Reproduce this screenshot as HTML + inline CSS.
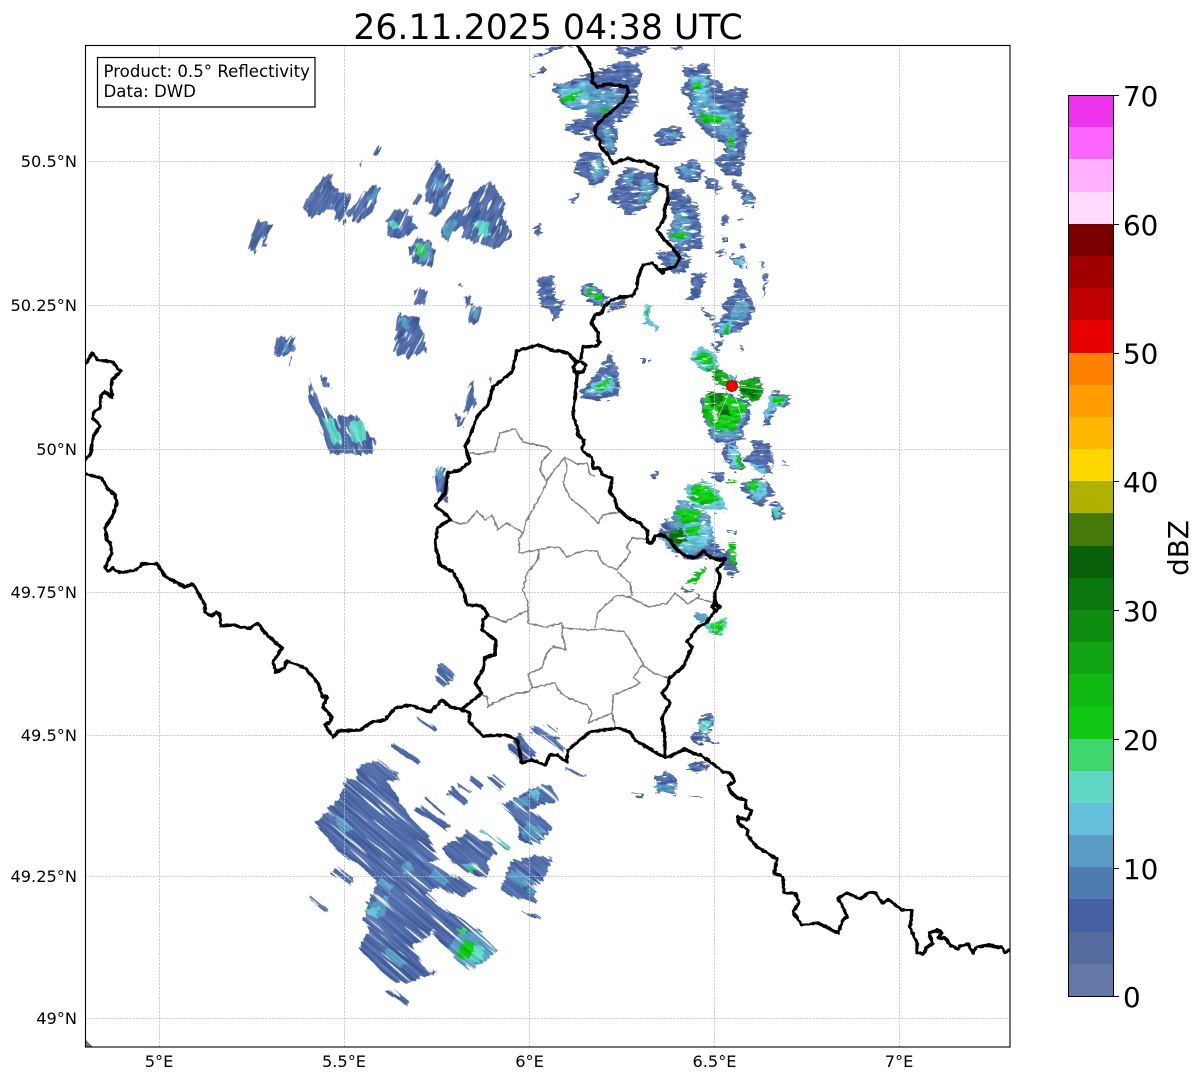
<!DOCTYPE html>
<html><head><meta charset="utf-8"><style>
html,body{margin:0;padding:0;background:#fff;overflow:hidden;width:1202px;height:1081px}
#f{width:1202px;height:1081px;overflow:hidden;contain:paint;position:relative}
svg{display:block;overflow:hidden}
text{font-family:"DejaVu Sans","Liberation Sans",sans-serif;fill:#000}
.b{fill:#4f6ba8}.c{fill:#4e7cb1}.m{fill:#5a9cc3}.l{fill:#66c2dc}.t{fill:#5fd6c4}.e{fill:#3ed76d}.g{fill:#10c814}.h{fill:#0fa414}.d{fill:#0a7a10}
.s{stroke:#4f6ba8;fill:none}
</style></head><body><div id="f">
<svg xmlns="http://www.w3.org/2000/svg" width="1202" height="1081" viewBox="0 0 1202 1081">
<defs>
<filter id="r" x="-3%" y="-3%" width="106%" height="106%" color-interpolation-filters="sRGB">
<feTurbulence type="fractalNoise" baseFrequency=".1 .3" numOctaves="2" seed="4" result="n"/>
<feDisplacementMap in="SourceGraphic" in2="n" scale="10" xChannelSelector="R" yChannelSelector="G" result="d"/>
<feColorMatrix in="n" type="matrix" values="0 0 0 0 0 0 0 0 0 0 0 0 0 0 0 8 0 0 0 -1.9" result="mk"/>
<feComposite in="d" in2="mk" operator="in" result="dm"/>
<feColorMatrix in="n" type="matrix" values="0 1 0 0 0 0 1 0 0 0 0 1 0 0 0 0 0 0 0 1" result="gr"/>
<feComposite in="dm" in2="gr" operator="arithmetic" k1="0" k2="1" k3=".35" k4="-.17" result="c"/>
<feComposite in="c" in2="dm" operator="in"/>
</filter>
<filter id="st" x="-2%" y="-2%" width="104%" height="104%" color-interpolation-filters="sRGB">
<feTurbulence type="fractalNoise" baseFrequency=".018 .32" numOctaves="2" seed="7" result="n"/>
<feDisplacementMap in="SourceGraphic" in2="n" scale="9" xChannelSelector="R" yChannelSelector="G" result="d"/>
<feColorMatrix in="n" type="matrix" values="0 0 0 0 0 0 0 0 0 0 0 0 0 0 0 9 0 0 0 -2.1" result="mk"/>
<feComposite in="d" in2="mk" operator="in" result="dm"/>
<feColorMatrix in="n" type="matrix" values="0 1 0 0 0 0 1 0 0 0 0 1 0 0 0 0 0 0 0 1" result="gr"/>
<feComposite in="dm" in2="gr" operator="arithmetic" k1="0" k2="1" k3=".3" k4="-.15" result="c"/>
<feComposite in="c" in2="dm" operator="in"/>
</filter>
<filter id="v" x="-3%" y="-3%" width="106%" height="106%" color-interpolation-filters="sRGB">
<feTurbulence type="fractalNoise" baseFrequency=".05 .28" numOctaves="2" seed="12" result="n"/>
<feDisplacementMap in="SourceGraphic" in2="n" scale="9" xChannelSelector="R" yChannelSelector="G" result="d"/>
<feColorMatrix in="n" type="matrix" values="0 0 0 0 0 0 0 0 0 0 0 0 0 0 0 9 0 0 0 -2.1" result="mk"/>
<feComposite in="d" in2="mk" operator="in" result="dm"/>
<feColorMatrix in="n" type="matrix" values="0 1 0 0 0 0 1 0 0 0 0 1 0 0 0 0 0 0 0 1" result="gr"/>
<feComposite in="dm" in2="gr" operator="arithmetic" k1="0" k2="1" k3=".3" k4="-.15" result="c"/>
<feComposite in="c" in2="dm" operator="in"/>
</filter>
<filter id="w" filterUnits="userSpaceOnUse" x="70" y="30" width="960" height="1030" color-interpolation-filters="sRGB">
<feTurbulence type="fractalNoise" baseFrequency=".28" numOctaves="1" seed="3" result="n"/>
<feDisplacementMap in="SourceGraphic" in2="n" scale="3" xChannelSelector="R" yChannelSelector="G"/>
</filter>
<clipPath id="ax"><rect x="85" y="45" width="925" height="1002"/></clipPath>
</defs>
<rect width="1202" height="1081" fill="#fff"/>
<g clip-path="url(#ax)">
<g filter="url(#r)">
<path class="b" d="M534 58L545 50 560 46 575 46 555 50 540 58ZM530 77L545 65 547 70 533 77ZM615 46H652L645 53 627 58 618 53ZM672 46H683L677 53Z"/>
<path class="b" d="M551 87L590 73 613 65 617 62 637 61 643 77 637 90 638 107 627 117 613 125 618 130 617 150 610 155 598 140 583 140 592 130 573 135 565 128 590 112 563 105Z"/>
<path class="m" d="M555 87L587 80 597 87 623 97 610 112 593 113 567 107Z"/>
<path class="l" d="M558 92L585 84 590 100 568 105Z"/>
<path class="g" d="M560 100L585 88 580 95 568 102ZM600 107L610 108 605 115Z"/>
<path class="m" d="M603 128L613 130 615 150 605 148Z"/>
<path class="b" d="M572 173L583 150 600 152 610 173 602 183 592 187 583 177ZM568 200L580 193 575 203Z"/>
<path class="m" d="M590 167L600 155 605 173 595 182Z"/>
<path class="t" d="M595 162L601 162 600 172 595 172Z"/>
<path class="b" d="M607 200L617 177 627 168 658 173 658 190 643 210 625 215 623 208 613 203Z"/>
<path class="m" d="M637 203L645 177 655 187 647 200ZM622 175L635 172 632 185 625 185Z"/>
<path class="g" d="M645 197L653 193 650 199Z"/>
<path class="b" d="M655 132L675 125 687 133 675 145 658 145Z"/>
<path class="m" d="M660 131L683 135 672 139Z"/>
<path class="b" d="M682 68L708 63 712 78 722 83 723 90 748 87 747 100 742 107 745 127 753 132 747 137 743 170 740 177 725 173 713 163 723 153 727 143 712 138 697 123 688 110 690 100 680 90 687 80Z"/>
<path class="m" d="M688 77L707 73 713 103 737 113 737 153 727 157 727 137 707 127 690 110 693 93Z"/>
<path class="l" d="M692 80L705 78 708 100 698 105ZM704 110L730 116 733 123 710 124Z"/>
<path class="g" d="M692 83L700 82 703 88 693 90ZM700 112L730 119 713 123 700 120ZM729 137L733 137 733 148 729 148Z"/>
<path class="b" d="M673 170L693 158 705 170 700 180 685 183ZM705 177L717 180 722 190 715 193 705 183ZM732 180L743 187 755 197 753 207 743 203 742 193 733 188Z"/>
<path class="m" d="M680 170L695 165 697 175 685 177ZM745 193L752 198 750 204 745 202Z"/>
<path class="b" d="M667 193L680 188 697 203 703 237 703 248 680 252 667 237 673 217Z"/>
<path class="m" d="M677 210L687 210 693 237 680 247 668 237Z"/>
<path class="g" d="M668 235L687 232 685 238 672 238Z"/>
<path class="b" d="M655 252L677 250 693 258 687 270 673 275 663 263ZM692 273L707 273 700 297 683 303 690 297ZM700 307L715 317 712 323Z"/>
<path class="m" d="M670 257L680 257 678 270 672 267Z"/>
<path class="b" d="M533 227L540 222 542 232 537 237ZM538 278L553 275 555 297 565 303 555 323 550 310 540 305ZM580 288L592 282 610 298 602 307 587 300ZM610 305L627 297 625 307 608 312Z"/>
<path class="m" d="M584 290L592 285 606 297 600 304 589 298Z"/>
<path class="g" d="M588 288L607 298 598 302 588 293Z"/>
<path class="l" d="M643 307L653 305 648 318 660 327 657 330 643 320Z"/>
<path class="g" d="M645 312L650 309 648 316Z"/>
<path class="b" d="M722 217H728V225H722ZM738 218H742V222H738ZM722 236H727V241H722ZM740 243H745V248H740ZM718 250H725V257H718ZM730 255L743 257 747 268 735 265ZM760 262L765 262 762 270ZM763 275H768L765 300Z"/>
<path class="l" d="M734 258L742 259 744 266 737 264Z"/>
<path class="b" d="M737 278L743 280 747 293 755 303 752 320 738 333 722 338 712 327 727 313 722 303 730 297Z"/>
<path class="m" d="M738 297L750 304 746 318 728 325 732 310Z"/>
<path class="l" d="M722 322L733 320 730 334 716 334Z"/>
<path class="g" d="M724 328L730 324 728 333 722 335Z"/>
<path class="b" d="M641 358L645 358 645 362 641 362ZM648 360L653 360 653 362 648 362ZM710 343L725 340 717 353ZM740 345L744 350 741 352Z"/>
<path class="b" d="M580 390L593 378 610 353 617 365 620 387 618 397 600 400 582 398Z"/>
<path class="l" d="M583 392L607 375 615 378 613 390 593 395Z"/>
<path class="g" d="M593 390L612 375 610 383 598 393Z"/>
<path class="l" d="M690 358L702 345 716 355 720 370 703 370Z"/>
<path class="g" d="M695 358L703 350 711 356 714 366 704 366Z"/>
<path class="b" d="M700 400L727 392 750 402 750 420 742 430 745 440 725 443 712 440 705 420ZM712 380L725 375 722 385ZM745 376L760 378 765 395 758 400 745 388Z"/>
<path class="m" d="M705 400L727 396 745 405 745 420 738 430 742 438 725 440 712 437 708 420ZM712 372L735 376 740 382 725 392Z"/>
<path class="g" d="M705 395L727 393 733 397 747 403 747 412 737 423 735 430 718 431 710 423 703 412Z"/>
<path class="h" d="M707 368L723 370 733 383 732 392 717 382ZM737 382L758 378 763 395 757 403 742 398Z"/>
<path class="d" d="M708 393L722 393 725 402 712 405ZM740 386L755 389 755 396 745 395ZM718 408L728 405 730 416 720 416Z"/>
<path class="b" d="M763 423L768 403 773 390 792 398 787 408 777 407 770 423 764 427Z"/>
<path class="l" d="M770 395L788 398 784 405 768 413 770 420 765 418Z"/>
<path class="g" d="M773 398L787 397 783 403 773 403Z"/>
<path class="b" d="M722 445L735 442 743 460 745 468 735 472 723 457ZM752 440L770 443 773 465 767 460 773 473 763 473 743 458 752 453ZM740 482L763 477 775 492 760 507 755 503 743 493ZM708 472L725 472 723 482 713 478ZM784 462H787V465H784Z"/>
<path class="l" d="M727 445L737 448 742 466 733 468ZM747 460L763 468 768 474 758 472ZM745 484L765 481 768 494 757 502Z"/>
<path class="g" d="M735 455L742 457 742 467 737 465ZM747 480L758 482 757 492 748 490ZM728 478L738 483 728 483Z"/>
<path class="b" d="M768 503L778 500 785 513 782 520 773 520 772 507Z"/>
<path class="t" d="M773 506L779 505 782 515 775 517Z"/>
<path class="b" d="M650 475L657 468 659 473 653 480Z"/>
<path class="l" d="M685 487L703 480 717 487 727 512 710 510 693 505 688 497Z"/>
<path class="b" d="M710 472L724 473 722 480 712 478Z"/>
<path class="g" d="M690 487L703 482 720 500 710 505 693 503Z"/>
<path class="b" d="M658 537L675 553 690 560 710 558 716 548 700 548 680 548Z"/>
<path class="m" d="M678 500L685 500 700 510 710 515 715 543 705 552 698 553 687 557 675 553 657 537 665 520 673 520 673 508Z"/>
<path class="l" d="M670 535L693 517 712 527 708 545 683 552Z"/>
<path class="b" d="M657 535L665 520 677 528 670 537ZM700 552L712 541 727 552 730 543 735 543 737 570 742 570 727 577 723 563 708 553Z"/>
<path class="g" d="M675 510L702 510 697 523 683 523ZM685 528L700 525 698 535 690 537ZM728 543L735 543 735 567 730 560Z"/>
<path class="d" d="M670 532L682 528 687 540 677 548 668 540Z"/>
<path class="b" d="M729 531L736 532 735 535 729 534ZM683 587L695 592 693 593 682 590ZM695 594L703 597 700 600Z"/>
<path class="g" d="M687 582L693 575 707 565 705 572 693 585Z"/>
<path class="m" d="M692 613L708 613 707 623 697 623Z"/>
<path class="t" d="M707 625L725 617 728 627 720 635 710 635Z"/>
<path class="g" d="M710 627L723 620 723 630 713 633Z"/>
<path class="b" d="M698 718L712 713 714 725 707 737 720 742 695 743 690 737 700 728ZM685 770L695 760 712 765 700 772ZM655 777L665 772 677 777 675 794 655 793Z"/>
<path class="t" d="M700 720L713 720 707 733 700 733Z"/>
<path class="m" d="M655 785L677 783 675 792 655 790Z"/>
<path class="b" d="M689 795L703 797 703 798 689 797ZM631 793L645 795 645 797 631 795Z"/>
</g>
<g stroke="#fff" stroke-width=".7" stroke-opacity=".75" fill="none">
<path d="M732 386L716 422M732 386L742 418M732 386L708 396M732 386L765 390M732 386L740 352M732 386L722 352"/>
</g>
<g transform="rotate(-63 400 300)"><g filter="url(#v)"><g transform="rotate(63 400 300)">
<path class="b" d="M250 237L258 220 271 223 264 247 262 247 264 233 255 253 249 252ZM303 207L323 175 332 175 330 185 350 195 345 222 338 223 335 212 327 210 320 215 307 218ZM348 212L372 185 382 188 370 215 357 223 348 220ZM372 155L379 145 382 147 377 157ZM359 165L363 160 364 161 361 166ZM387 220L395 210 407 210 417 228 405 237 388 237ZM428 175L438 160 443 168 453 180 448 203 438 217 430 215 433 203 425 203ZM413 202L420 193 422 197 417 205ZM407 247L420 237 432 243 435 252 432 267 413 263ZM440 232L453 212 467 208 473 190 492 182 505 203 503 218 512 235 498 247 488 247 473 242 463 237 463 225 453 232 447 243Z"/>
<path class="m" d="M367 200L373 185 380 190 372 205ZM435 178L445 182 440 190 432 190ZM437 197L445 197 440 210ZM443 230L452 218 458 222 447 240ZM415 243L430 243 432 260 418 262Z"/>
<path class="t" d="M388 222L397 218 398 228 392 229ZM473 222L488 220 490 235 482 238Z"/>
<path class="e" d="M415 244L425 245 425 257 417 256Z"/>
<path class="b" d="M413 288L428 290 425 305 413 303ZM397 313L418 317 428 350 407 357 395 352ZM277 337L295 337 295 352 278 358 274 348ZM290 357H292V367H290ZM458 283H461L463 287H459ZM463 298L470 293 472 305 467 307ZM470 308L482 307 478 323 470 323ZM320 375L328 377 330 388 325 389ZM455 413L463 417 463 427 457 426ZM467 393L473 380 477 403 470 410 465 420ZM489 378H492V382H489ZM433 477L442 467 448 472 448 502 440 500Z"/>
<path class="m" d="M399 316L408 318 410 330 402 328ZM283 340L287 340 287 352 283 352ZM473 309L481 309 477 318 472 318ZM435 470L442 468 442 478 438 480Z"/>
</g></g></g>
<g transform="rotate(72 340 420)"><g filter="url(#v)"><g transform="rotate(-72 340 420)">
<path class="b" d="M308 375L313 393 327 412 333 418 337 417 357 415 375 440 373 453 357 455 330 453 322 430 310 403Z"/>
<path class="t" d="M322 418L333 418 343 442 333 445ZM347 425L363 418 367 440 353 443Z"/>
</g></g></g>
<g transform="rotate(40 500 720)"><g filter="url(#st)"><g transform="rotate(-40 500 720)">
<path class="b" d="M437 668L442 663 455 677 445 687 437 680ZM507 748L520 733 537 755 522 762ZM530 726L560 738 556 745 533 733ZM547 723L558 730 556 732 546 725ZM537 730L567 748 564 750 535 732ZM565 767L585 775 583 778 563 770ZM417 717L437 729 436 731 416 720Z"/>
</g></g></g>
<g transform="rotate(40 420 870)"><g filter="url(#st)"><g transform="rotate(-40 420 870)">
<path class="b" d="M358 767L377 762 397 773 400 780 387 780 397 793 410 817 430 837 440 860 427 863 450 873 477 890 463 897 437 887 427 893 440 907 460 917 480 930 497 950 487 960 473 970 457 960 447 950 433 930 428 937 413 947 427 970 437 973 413 980 408 983 397 982 383 973 360 947 370 927 363 920 370 897 377 883 360 863 330 843 317 823 327 810 343 793 345 780 357 780Z"/>
<g class="s" stroke-width="5"><path d="M390 745L420 762"/><path d="M388 990L408 1003" stroke-width="4"/><path d="M309 898L327 912" stroke-width="2.5"/><path d="M333 870L352 882" stroke-width="8"/><path d="M425 798L445 815" stroke-width="3"/><path d="M417 808L448 828" stroke-width="7"/><path d="M470 778L483 787" stroke-width="6"/><path d="M490 777L503 788" stroke-width="8"/><path d="M450 790L467 803" stroke-width="10"/><path d="M458 785L470 793" stroke-width="3"/><path d="M522 912L540 918" stroke-width="2.5"/><path d="M334 845L350 860" stroke-width="3"/><path d="M405 840L430 860" stroke-width="6"/></g>
<path class="b" d="M443 847L467 832 490 843 497 853 485 863 490 870 485 877 467 873 453 863ZM502 805L517 797 540 785 553 787 557 802 540 805 530 810 548 823 553 828 540 843 517 840 520 830 517 820ZM510 862L535 855 552 860 543 883 533 880 537 903 520 900 500 890 507 873Z"/>
<path class="m" d="M333 818L345 817 352 830 343 835ZM400 865L410 860 413 870 405 877ZM380 877L395 887 388 892 378 885ZM370 903L390 895 385 915 375 920ZM387 947L410 965 400 966 384 955ZM432 870L450 880 445 886 430 878ZM512 800L530 795 528 806 515 810ZM527 822L545 832 538 842 522 835ZM512 868L530 880 525 888 508 878ZM530 884L537 890 533 898 528 892Z"/>
<path class="l" d="M460 863L477 865 473 873ZM482 828L510 847 508 849 480 832ZM530 793L538 787 540 795 533 800ZM366 910L380 905 376 918 368 917Z"/>
<path class="t" d="M534 799L542 796 538 803Z"/>
<path class="e" d="M503 844L510 847 508 849 501 846ZM468 868L477 866 474 873Z"/>
<path class="m" d="M457 935L480 930 497 950 487 960 473 970 457 960 447 950Z"/>
<path class="t" d="M472 945L485 947 480 963 470 962Z"/>
<path class="e" d="M458 928L468 930 463 937Z"/>
<path class="g" d="M465 940L475 943 470 960 457 957 460 947Z"/>
</g></g></g>
</g>
<g stroke="#bdbdbd" stroke-width=".8" stroke-dasharray="2.2 1.2" fill="none" clip-path="url(#ax)">
<path d="M159.500 45V1047M344.500 45V1047M529.500 45V1047M714.500 45V1047M899.500 45V1047M85 161.500H1010M85 305.500H1010M85 449.500H1010M85 592.500H1010M85 735.500H1010M85 876.500H1010M85 1018.500H1010"/>
</g>
<g clip-path="url(#ax)" fill="none" stroke-linejoin="round" stroke-linecap="round">
<path fill="#777" stroke="none" d="M85 1039L93 1047H85Z"/>
<g filter="url(#w)">
<g stroke="#808080" stroke-width="1.5">
<path d="M450 520L460 524 467 523 477 511 485 520 492 515 498 530 507 523 523 533 527 520 537 502 545 487 547 480 565 457 567 470 563 483 570 498 585 510 598 523 603 515 620 512"/>
<path d="M470 453L480 454 495 451 500 433 515 429 523 442 547 447 551 451 542 462 540 470 545 480"/>
<path d="M565 457L577 464 587 463 590 475 595 476"/>
<path d="M523 533L519 538 519 553 537 550 550 547 560 548 567 557 582 551 597 551 602 563 617 570 630 553 627 547 632 538 648 539"/>
<path d="M618 572L630 583 632 595"/>
<path d="M539 550L538 560 527 573 523 590 528 603 528 623 545 627 562 623 563 628 587 630 603 629 625 632 637 653 643 664"/>
<path d="M617 595L630 597 648 607 668 603 675 593 688 604 697 598 715 603"/>
<path d="M617 595L598 612 595 627"/>
<path d="M488 615L505 622 528 610"/>
<path d="M563 628L562 633 566 650 553 646 547 653 542 668 528 674 532 687 528 692 517 693 493 703 488 707 487 697 482 695"/>
<path d="M532 688L555 683 558 690 568 698 587 705 592 713 588 723 612 713 613 703 613 695 633 687 640 683 633 677 643 665 653 673 668 678"/>
<path d="M612 713L616 728"/>
</g>
<g stroke="#000" stroke-width="3.3">
<path d="M578 46L585 57 590 65 593 77 592 82 597 87 608 84 627 87 629 92 623 102 613 110 605 117 595 127 595 135 600 140 600 146 608 155 613 164 620 161 628 158 635 161 643 161 652 165 658 168 656 173 656 183 667 187 668 200 664 210 665 217 657 230 663 238 673 248 680 258 675 267 663 270 663 273 652 263 643 265 638 277 637 288 632 296 620 297 610 301 604 307 602 313 595 315 591 323 598 332 598 340 600 342 597 346 583 347 581 358"/>
<path d="M538 345L555 351 560 351 568 353 575 361 581 362 586 365 583 372 575 372 573 368 577 362M577 372L577 377 575 397 573 415 577 427 578 435 584 440 582 450 592 458 593 468 599 468 603 475 612 478 610 493 615 498 617 508 628 518 640 523 648 532 647 542 652 543 655 536 662 535 670 540 677 550 688 557 697 557 703 551 710 557 720 560 725 558 723 563 717 570 720 575 719 583 715 592 715 605 720 607 714 612 707 622 697 628 687 642 692 647 683 667 670 678 667 687 662 693 670 703 662 718 665 740 665 758"/>
<path d="M716 603L712 607 716 611 720 607Z"/>
<path d="M86 363L93 353 97 360 113 362 117 368 121 371 112 380 111 387 112 397 105 392 101 395 100 408 93 413 93 418 100 426 93 437 91 453 86 459"/>
<path d="M85 474L102 478 107 488 115 495 117 503 113 515 105 528 107 540 110 543 112 553 105 568 108 571 113 568 118 572 125 572 133 571 138 568 143 564 157 564 166 577 185 587 193 584 205 605 205 612 212 616 216 612 220 615 221 626 235 625 240 627 250 628 258 623 265 633 282 648 273 662 276 672 284 668 287 661 305 668 318 683 322 696 327 697 323 707 332 717 330 722 325 725 333 737 339 731 360 730 372 722 385 720 395 708 410 705 430 712 442 700 450 707 460 709 470 713 469 722 483 736 507 735 517 740 522 763 532 760 545 765 550 755 557 755 567 762 568 750 580 740 590 732 618 728 630 732 635 740 660 755 665 758 673 755 685 749 692 753 700 755 712 763 723 772 730 773 735 781 728 786 732 794 738 798 746 800 746 808 752 811 747 820 738 817 738 823 748 830 747 835 757 847 767 853 777 859 774 873 783 877 784 893 795 893 799 902 793 912 802 925 818 923 838 933 843 920 847 917 843 907 838 898 847 893 860 899 870 892 876 893 882 903 889 900 902 910 912 910 910 927 917 943 917 953 923 954 927 947 933 944 929 933 937 930 942 933 938 938 945 938 950 945 958 949 960 946 968 944 973 953 977 947 988 945 1003 948 1005 953 1010 949"/>
<path d="M462 709L482 693 475 683 483 670 485 657 495 655 496 640 482 630 483 620 488 615 482 606 467 605 463 590 453 572 440 565 435 543 438 527 450 520 447 515 435 506 445 493 448 473 460 470 470 462 465 445 467 443 478 415 488 405 493 387 512 372 517 351 538 345"/>
</g>
</g>
<circle cx="732" cy="386" r="5.500" fill="#f00" stroke="#900" stroke-width=".8"/>
</g>
<rect x="85.500" y="45.500" width="924.500" height="1001.500" fill="none" stroke="#000" stroke-width="1.100"/>
<rect x="97.500" y="57.500" width="217.500" height="49.500" fill="#fff" stroke="#000" stroke-width="1.200"/>
<g font-size="16.6">
<text x="103.500" y="77">Product: 0.5° Reflectivity</text>
<text x="103.500" y="97">Data: DWD</text>
</g>
<text x="548" y="39" font-size="34.7" text-anchor="middle">26.11.2025 04:38 UTC</text>
<g font-size="16.2" text-anchor="end">
<text x="77" y="167">50.5°N</text><text x="77" y="311">50.25°N</text><text x="77" y="455">50°N</text><text x="77" y="598">49.75°N</text><text x="77" y="741">49.5°N</text><text x="77" y="882">49.25°N</text><text x="77" y="1024">49°N</text>
</g>
<g font-size="16.2" text-anchor="middle">
<text x="159" y="1067">5°E</text><text x="344" y="1067">5.5°E</text><text x="529.5" y="1067">6°E</text><text x="714.5" y="1067">6.5°E</text><text x="899" y="1067">7°E</text>
</g>
<g shape-rendering="crispEdges">
<rect x="1068" y="964" width="45" height="32" fill="#6478a8"/>
<rect x="1068" y="932" width="45" height="32" fill="#556ba0"/>
<rect x="1068" y="899" width="45" height="33" fill="#4560a3"/>
<rect x="1068" y="867" width="45" height="32" fill="#4e7cb1"/>
<rect x="1068" y="835" width="45" height="32" fill="#5a9cc3"/>
<rect x="1068" y="803" width="45" height="32" fill="#65c0dd"/>
<rect x="1068" y="771" width="45" height="32" fill="#60d6c4"/>
<rect x="1068" y="739" width="45" height="32" fill="#3ed76d"/>
<rect x="1068" y="706" width="45" height="33" fill="#10c814"/>
<rect x="1068" y="674" width="45" height="32" fill="#10b814"/>
<rect x="1068" y="642" width="45" height="32" fill="#10a414"/>
<rect x="1068" y="610" width="45" height="32" fill="#0e8c10"/>
<rect x="1068" y="578" width="45" height="32" fill="#0a780e"/>
<rect x="1068" y="546" width="45" height="32" fill="#086008"/>
<rect x="1068" y="513" width="45" height="33" fill="#467a08"/>
<rect x="1068" y="481" width="45" height="32" fill="#afb000"/>
<rect x="1068" y="449" width="45" height="32" fill="#ffd700"/>
<rect x="1068" y="417" width="45" height="32" fill="#ffb800"/>
<rect x="1068" y="385" width="45" height="32" fill="#ff9c00"/>
<rect x="1068" y="353" width="45" height="32" fill="#ff8000"/>
<rect x="1068" y="320" width="45" height="33" fill="#e60000"/>
<rect x="1068" y="288" width="45" height="32" fill="#c00000"/>
<rect x="1068" y="256" width="45" height="32" fill="#a00000"/>
<rect x="1068" y="224" width="45" height="32" fill="#7a0000"/>
<rect x="1068" y="192" width="45" height="32" fill="#ffdcff"/>
<rect x="1068" y="159" width="45" height="33" fill="#ffb0ff"/>
<rect x="1068" y="127" width="45" height="32" fill="#ff66ff"/>
<rect x="1068" y="95" width="45" height="32" fill="#ee33ee"/>
<rect x="1068.5" y="95.5" width="45" height="901" fill="none" stroke="#000" stroke-width="1"/>
<path d="M1113 95.500h6M1113 224.500h6M1113 353.500h6M1113 481.500h6M1113 610.500h6M1113 739.500h6M1113 868.500h6M1113 996.500h6" stroke="#000" stroke-width="1"/>
</g>
<g font-size="27.78">
<text x="1123" y="106">70</text><text x="1123" y="235">60</text><text x="1123" y="363.500">50</text><text x="1123" y="492">40</text><text x="1123" y="621">30</text><text x="1123" y="750">20</text><text x="1123" y="879">10</text><text x="1123" y="1007">0</text>
</g>
<text transform="translate(1188 548) rotate(-90)" font-size="27.78" text-anchor="middle">dBZ</text>
</svg>
</div></body></html>
